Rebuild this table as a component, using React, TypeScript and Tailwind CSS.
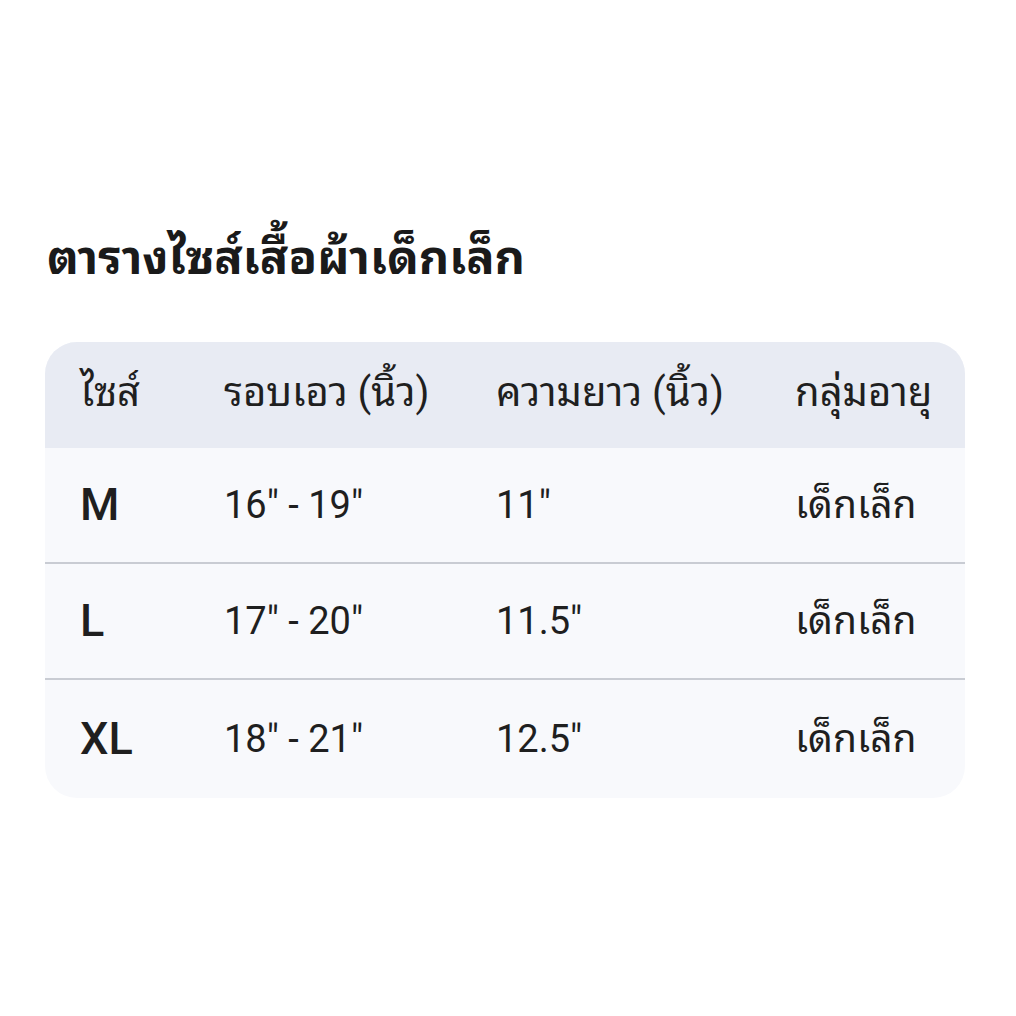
const rows = [
  { size: 'M', waist: '16" - 19"', length: '11"', age: 'เด็กเล็ก' },
  { size: 'L', waist: '17" - 20"', length: '11.5"', age: 'เด็กเล็ก' },
  { size: 'XL', waist: '18" - 21"', length: '12.5"', age: 'เด็กเล็ก' },
]

export default function App() {
  return (
    <div className="w-[1016px] h-[1016px] bg-white px-[45px] pt-[226px] text-[#1f1f1f] font-['Roboto','Noto_Sans_Thai_Looped',sans-serif]">
      {/* Title */}
      <h1 className="pl-[2px] text-[47px] font-bold leading-[64px] text-[#1a1a1a]">
        ตารางไซส์เสื้อผ้าเด็กเล็ก
      </h1>

      {/* Size table */}
      <div className="mt-[52px] w-[920px] overflow-hidden rounded-[32px] bg-[#f8f9fc]">
        <div className="grid h-[106px] grid-cols-[144px_272px_299px_1fr] items-center whitespace-nowrap bg-[#e8ebf3] px-[35px] pb-[4px] text-[40px]">
          <div>ไซส์</div>
          <div>รอบเอว (นิ้ว)</div>
          <div>ความยาว (นิ้ว)</div>
          <div>กลุ่มอายุ</div>
        </div>
        {rows.map((r, idx) => (
          <div
            key={r.size}
            className={`grid grid-cols-[144px_272px_299px_1fr] items-center whitespace-nowrap px-[35px] text-[38px] ${
              idx < rows.length - 1 ? 'h-[116px] border-b-2 border-[#c9ccd3]' : 'h-[118px]'
            }`}
          >
            <div className="text-[45px] font-medium">{r.size}</div>
            <div>{r.waist}</div>
            <div>{r.length}</div>
            <div className="text-[39px]">{r.age}</div>
          </div>
        ))}
      </div>
    </div>
  )
}
